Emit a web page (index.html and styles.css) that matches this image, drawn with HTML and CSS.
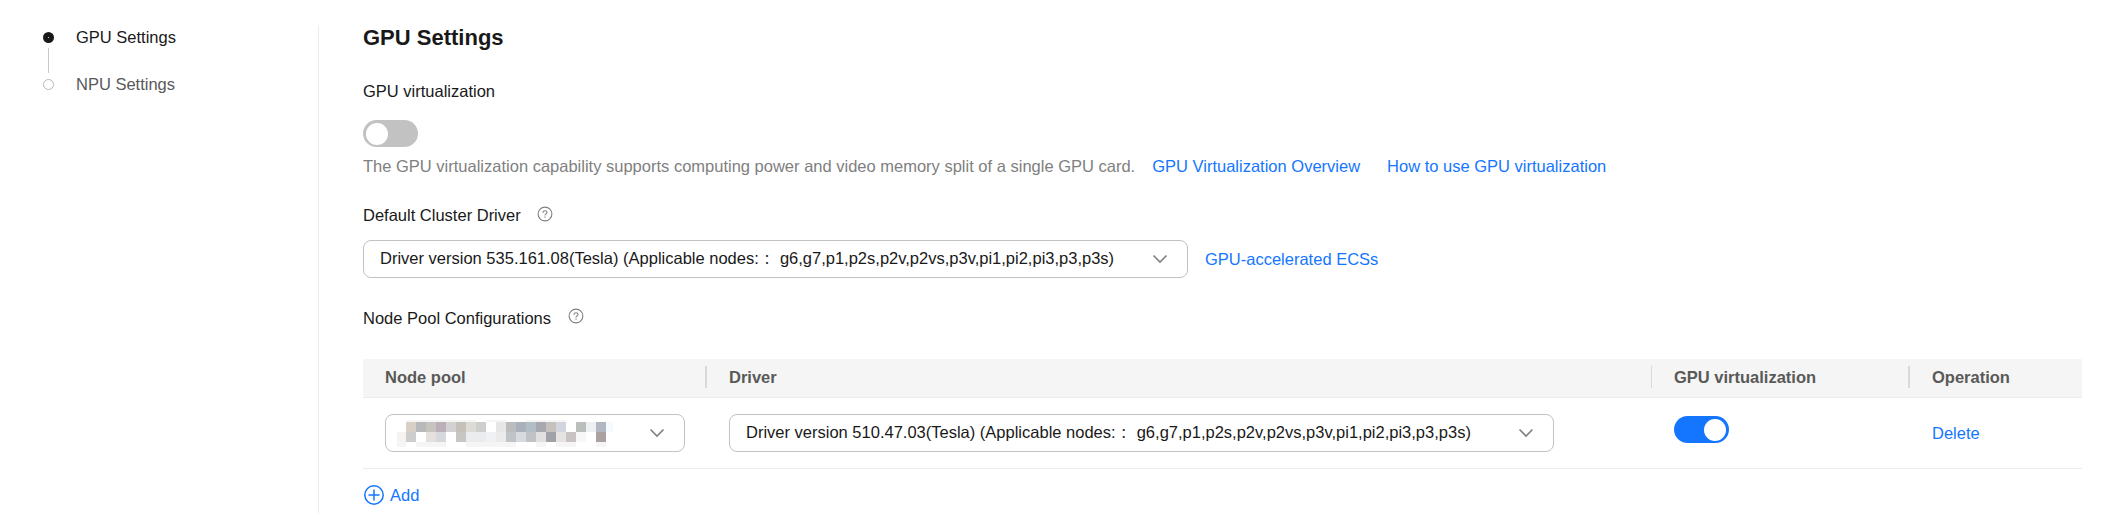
FILE: index.html
```html
<!DOCTYPE html>
<html lang="en">
<head>
<meta charset="utf-8">
<title>GPU Settings</title>
<link rel="stylesheet" href="styles.css">
</head>
<body>
<div class="page">
  <nav class="steps">
    <a class="step step-active"><span class="dot"></span>GPU Settings</a>
    <span class="step-line"></span>
    <a class="step"><span class="dot"></span>NPU Settings</a>
  </nav>
  <main class="content">
    <h1 class="title">GPU Settings</h1>
    <div class="label virt-label">GPU virtualization</div>
    <span class="toggle"><span class="knob"></span></span>
    <p class="hint"><span class="hint-text">The GPU virtualization capability supports computing power and video memory split of a single GPU card.</span><a class="link overview">GPU Virtualization Overview</a><a class="link howto">How to use GPU virtualization</a></p>
    <div class="label driver-label">Default Cluster Driver
      <svg class="help" viewBox="0 0 16 16"><circle cx="8" cy="8" r="6.9"/><path d="M6 6.7C6 5.4 6.8 4.7 8 4.7s2 .7 2 1.7c0 1.5-2 1.5-2 3.1M8 10.5v1.2"/></svg>
    </div>
    <div class="driver-row">
      <div class="select select-wide"><span class="value">Driver version 535.161.08(Tesla) (Applicable nodes:<span class="cjk">：</span> g6,g7,p1,p2s,p2v,p2vs,p3v,pi1,pi2,pi3,p3,p3s)</span><svg class="chevron" viewBox="0 0 16 10"><path d="M1.5 1.5 8 8l6.500-6.500"/></svg></div>
      <a class="link ecs">GPU-accelerated ECSs</a>
    </div>
    <div class="label pool-label">Node Pool Configurations
      <svg class="help" viewBox="0 0 16 16"><circle cx="8" cy="8" r="6.9"/><path d="M6 6.700C6 5.400 6.800 4.700 8 4.700s2 .7 2 1.700c0 1.500-2 1.500-2 3.100M8 10.500v1.200"/></svg>
    </div>
    <div class="table">
      <div class="row head">
        <div class="cell">Node pool</div>
        <div class="cell">Driver</div>
        <div class="cell thin">GPU virtualization</div>
        <div class="cell">Operation</div>
      </div>
      <div class="row body">
        <div class="cell">
          <div class="select select-pool">
            <svg class="mask" viewBox="0 0 216 28" shape-rendering="crispEdges">
              <path fill="#f5f5f5" d="M9 1h70v2H9zM89 1h20v2H89zM129 1h40v2h-40zM0 23h9v5H0zM19 23h30v5H19zM69 23h50v5H69zM139 23h10v5h-10zM159 23h20v5h-20zM199 23h10v5h-10z"/>
              <path fill="#d8d0c7" d="M9 3h10v10H9z"/><path fill="#b7b9bb" d="M19 3h10v10H19z"/><path fill="#c7c4c0" d="M29 3h10v10H29z"/><path fill="#bcb0b8" d="M39 3h10v10H39z"/><path fill="#d2d2d2" d="M49 3h10v10H49z"/><path fill="#c6c0ba" d="M59 3h10v10H59z"/><path fill="#dcdbd5" d="M69 3h10v10H69z"/><path fill="#cccfcc" d="M79 3h10v10H79z"/><path fill="#e6e6e6" d="M99 3h10v10H99z"/><path fill="#babcbe" d="M109 3h10v10h-10z"/><path fill="#abb1bb" d="M119 3h10v10h-10z"/><path fill="#b2bec6" d="M129 3h10v10h-10z"/><path fill="#a8a8af" d="M139 3h10v10h-10z"/><path fill="#c6c1bc" d="M149 3h10v10h-10z"/><path fill="#d0d5de" d="M159 3h10v10h-10z"/><path fill="#babfbb" d="M179 3h10v10h-10z"/><path fill="#edeff3" d="M189 3h10v10h-10z"/><path fill="#b2b6c1" d="M199 3h10v10h-10z"/><path fill="#f5faff" d="M209 3h7v10h-7z"/>
              <path fill="#f6f2ef" d="M0 13h9v10H0z"/><path fill="#cdcdce" d="M9 13h10v10H9z"/><path fill="#e3e0de" d="M29 13h10v10H29z"/><path fill="#d7d8dd" d="M39 13h10v10H39z"/><path fill="#c7c6c2" d="M59 13h10v10H59z"/><path fill="#ebecee" d="M69 13h20v10H69z"/><path fill="#f0f1f4" d="M89 13h10v10H89z"/><path fill="#ebebeb" d="M99 13h10v10H99z"/><path fill="#c0c4c7" d="M109 13h10v10h-10z"/><path fill="#d7dbdf" d="M119 13h10v10h-10z"/><path fill="#c0c2c6" d="M129 13h10v10h-10z"/><path fill="#e1e0de" d="M139 13h10v10h-10z"/><path fill="#a1a2a8" d="M149 13h10v10h-10z"/><path fill="#e5e4e3" d="M159 13h10v10h-10z"/><path fill="#c9c4c3" d="M169 13h10v10h-10z"/><path fill="#f7f7f7" d="M179 13h10v10h-10z"/><path fill="#aba1a0" d="M199 13h10v10h-10z"/>
            </svg>
            <svg class="chevron" viewBox="0 0 16 10"><path d="M1.500 1.500 8 8l6.500-6.500"/></svg>
          </div>
        </div>
        <div class="cell">
          <div class="select select-wide"><span class="value">Driver version 510.47.03(Tesla) (Applicable nodes:<span class="cjk">：</span> g6,g7,p1,p2s,p2v,p2vs,p3v,pi1,pi2,pi3,p3,p3s)</span><svg class="chevron" viewBox="0 0 16 10"><path d="M1.500 1.500 8 8l6.500-6.500"/></svg></div>
        </div>
        <div class="cell"><span class="toggle toggle-on"><span class="knob"></span></span></div>
        <div class="cell"><a class="link">Delete</a></div>
      </div>
    </div>
    <a class="link add"><svg class="plus" viewBox="0 0 20 20"><circle cx="10" cy="10" r="9.200"/><path d="M10 4.500v11M4.500 10h11"/></svg>Add</a>
  </main>
</div>
</body>
</html>
```
FILE: styles.css
```css
* { box-sizing: border-box; }
body {
  margin: 0;
  background: #fff;
  color: #191919;
  font: 16.5px/22px "Liberation Sans", Arial, "Noto Sans CJK TC", sans-serif;
  white-space: nowrap;
}
.page { display: flex; height: 513px; padding-top: 25px; overflow: hidden; }
.steps { width: 319px; border-right: 1px solid #ebebeb; padding: 1px 0 0 43px; }
.step { display: flex; align-items: center; height: 22px; color: #595959; }
.step-active { color: #191919; }
.dot { width: 11px; height: 11px; margin-right: 22px; border: 1px solid #b8b8b8; border-radius: 50%; }
.step-active .dot { border: 5px solid #191919; }
.step-line { display: block; width: 1px; height: 25px; margin: 0 0 0 5px; background: #c9c9c9; }
.content { flex: 1; padding-left: 44px; }
.title { margin: 1px 0 0; font-size: 22px; line-height: 24px; font-weight: 700; }
.label { display: flex; }
.virt-label { margin-top: 30px; }
.toggle { display: flex; width: 55px; height: 27px; margin-top: 18px; padding: 3px; border-radius: 14px; background: #c2c2c2; }
.knob { width: 22px; height: 22px; border-radius: 50%; background: #fff; }
.toggle-on { justify-content: flex-end; background: #1476ff; }
.hint { display: flex; margin: 8px 0 0; color: #808080; }
.link { color: #1476ff; }
.overview { margin-left: 17px; }
.howto { margin-left: 27px; }
.driver-label { margin-top: 27px; }
.help { width: 16px; height: 16px; margin: 2px 0 0 16px; fill: none; stroke: #808080; stroke-width: 1.1; }
.pool-label .help { margin: 1px 0 0 17px; }
.driver-row { display: flex; align-items: center; margin-top: 14px; gap: 17px; }
.select { display: flex; align-items: center; justify-content: space-between; height: 38px; padding: 0 19px 0 16px; border: 1px solid #c2c2c2; border-radius: 8px; }
.select-wide { width: 825px; }
.select-pool { width: 300px; padding-left: 11px; }
.value { padding-bottom: 2px; }
.cjk { display: inline-block; width: 16.5px; font: 400 13px/1 "Noto Sans CJK TC", sans-serif; text-align: center; }
.chevron { width: 16px; height: 10px; fill: none; stroke: #808080; stroke-width: 1.6; }
.mask { width: 216px; height: 28px; }
.pool-label { margin-top: 29px; }
.table { width: 1719px; margin-top: 30px; }
.row { display: grid; grid-template-columns: 344px 945px 258px 172px; align-items: center; border-bottom: 1px solid #ebebeb; }
.cell { padding-left: 22px; }
.head { height: 39px; padding-bottom: 2px; background: #f5f5f5; color: #595959; font-weight: 700; }
.head .cell + .cell { border-left: 2px solid #d9d9d9; padding-left: 22px; margin-left: -2px; }
.head .cell.thin { border-left-width: 1px; margin-left: -1px; }
.body { height: 71px; }
.body .toggle { margin: -8px 0 0; }
.add { display: flex; align-items: center; margin-top: 15px; }
.plus { width: 20px; height: 20px; margin: 0 6px 0 1px; fill: none; stroke: #1476ff; stroke-width: 1.500; }
```
